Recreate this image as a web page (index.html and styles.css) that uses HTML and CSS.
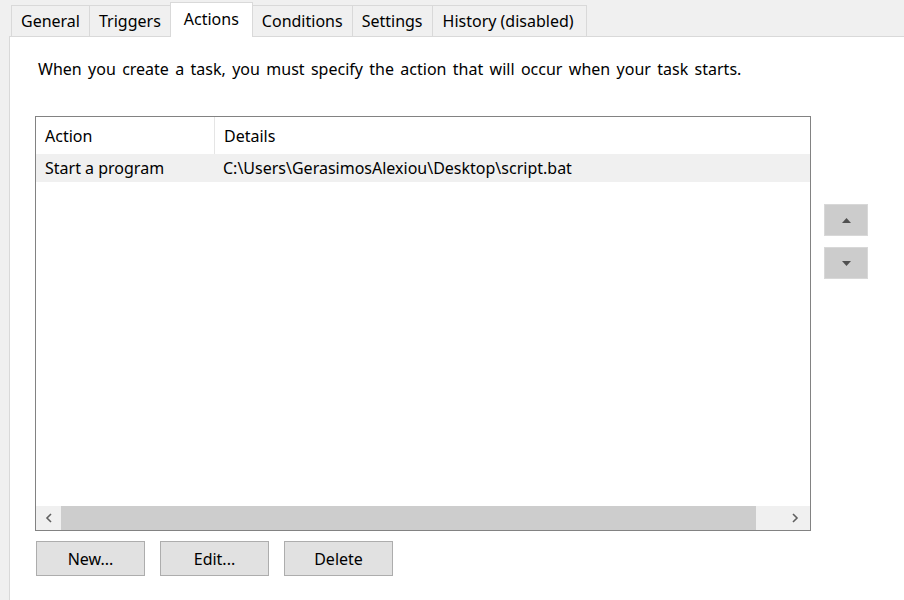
FILE: index.html
```html
<!DOCTYPE html>
<html lang="en">
<head>
    <meta charset="UTF-8">
    <title>Task Properties - Actions</title>
    <link rel="stylesheet" href="styles.css">
</head>
<body>
    <div class="tabs">
        <div class="tab">General</div>
        <div class="tab">Triggers</div>
        <div class="tab active">Actions</div>
        <div class="tab">Conditions</div>
        <div class="tab">Settings</div>
        <div class="tab last">History (disabled)</div>
    </div>

    <div class="panel">
        <p class="intro">When you create a task, you must specify the action that will occur when your task starts.</p>

        <div class="list-row">
            <div class="listbox">
                <div class="list-head">
                    <div class="col-action">Action</div>
                    <div class="col-details">Details</div>
                </div>
                <div class="list-item">
                    <div class="col-action">Start a program</div>
                    <div class="col-details">C:\Users\GerasimosAlexiou\Desktop\script.bat</div>
                </div>
                <div class="list-body"></div>
                <div class="hscroll">
                    <div class="arrow">
                        <svg width="8" height="10" viewBox="0 0 8 10"><polyline points="6,1 2,5 6,9" fill="none" stroke="#606060" stroke-width="1.6"/></svg>
                    </div>
                    <div class="thumb"></div>
                    <div class="arrow right">
                        <svg width="8" height="10" viewBox="0 0 8 10"><polyline points="2,1 6,5 2,9" fill="none" stroke="#606060" stroke-width="1.6"/></svg>
                    </div>
                </div>
            </div>

            <div class="order-buttons">
                <div class="small-btn">
                    <svg width="9" height="5" viewBox="0 0 9 5"><polygon points="0,5 9,5 4.5,0" fill="#505050"/></svg>
                </div>
                <div class="small-btn">
                    <svg width="9" height="5" viewBox="0 0 9 5"><polygon points="0,0 9,0 4.5,5" fill="#505050"/></svg>
                </div>
            </div>
        </div>

        <div class="buttons">
            <button>New...</button>
            <button>Edit...</button>
            <button>Delete</button>
        </div>
    </div>
</body>
</html>
```

FILE: styles.css
```css
html, body {
    height: 100%;
}
body {
    margin: 0;
    background-color: #f0f0f0;
    font-family: "Noto Sans", "Open Sans", sans-serif;
    font-size: 16px;
    color: #000;
    display: flex;
    flex-direction: column;
    overflow: hidden;
}

/* tab strip */
.tabs {
    display: flex;
    align-items: flex-end;
    height: 37px;
    padding-left: 11px;
    margin-bottom: -1px;
    position: relative;
    z-index: 1;
}
.tab {
    height: 30px;
    line-height: 31px;
    padding: 0 9px;
    border: 1px solid #d9d9d9;
    border-right: none;
    background-color: #f0f0f0;
}
.tab.last {
    border-right: 1px solid #d9d9d9;
    padding: 0 12px 0 10px;
}
.tab.active {
    height: 34px;
    line-height: 33px;
    background-color: #fff;
    border-bottom: none;
    border-right: 1px solid #d9d9d9;
    padding: 0 13px;
}
.tab.active + .tab {
    border-left: none;
}

/* content panel */
.panel {
    flex: 1;
    margin-left: 9px;
    background-color: #fff;
    border-top: 1px solid #d9d9d9;
    border-left: 1px solid #d9d9d9;
    padding: 0 0 0 25px;
}
.intro {
    margin: 21px 0 0 3px;
    line-height: 22px;
    word-spacing: 2.2px;
}

.list-row {
    display: flex;
    margin-top: 36px;
}
.listbox {
    width: 774px;
    height: 413px;
    border: 1px solid #828282;
    display: flex;
    flex-direction: column;
}
.list-head, .list-item {
    display: flex;
}
.list-head {
    height: 37px;
    line-height: 38px;
}
.list-head .col-action {
    border-right: 1px solid #e5e5e5;
}
.list-item {
    height: 28px;
    line-height: 28px;
    background-color: #f0f0f0;
}
.col-action {
    width: 169px;
    padding-left: 9px;
}
.col-details {
    padding-left: 9px;
}
.list-body {
    flex: 1;
}

.hscroll {
    height: 24px;
    display: flex;
    background-color: #f0f0f0;
}
.hscroll .arrow {
    width: 25px;
    display: flex;
    align-items: center;
    justify-content: center;
}
.hscroll .arrow.right {
    width: 54px;
    justify-content: flex-end;
    padding-right: 11px;
    box-sizing: border-box;
}
.hscroll .thumb {
    flex: 1;
    background-color: #cdcdcd;
}

.order-buttons {
    margin-left: 13px;
    padding-top: 88px;
    display: flex;
    flex-direction: column;
    gap: 11px;
}
.small-btn {
    width: 42px;
    height: 30px;
    background-color: #cccccc;
    border: 1px solid #d8d8d8;
    display: flex;
    align-items: center;
    justify-content: center;
}

.buttons {
    display: flex;
    gap: 15px;
    margin-top: 10px;
    padding-left: 1px;
}
button {
    width: 109px;
    height: 35px;
    background-color: #e1e1e1;
    border: 1px solid #adadad;
    font-family: inherit;
    font-size: 16px;
    color: #000;
    padding: 0;
}
```
